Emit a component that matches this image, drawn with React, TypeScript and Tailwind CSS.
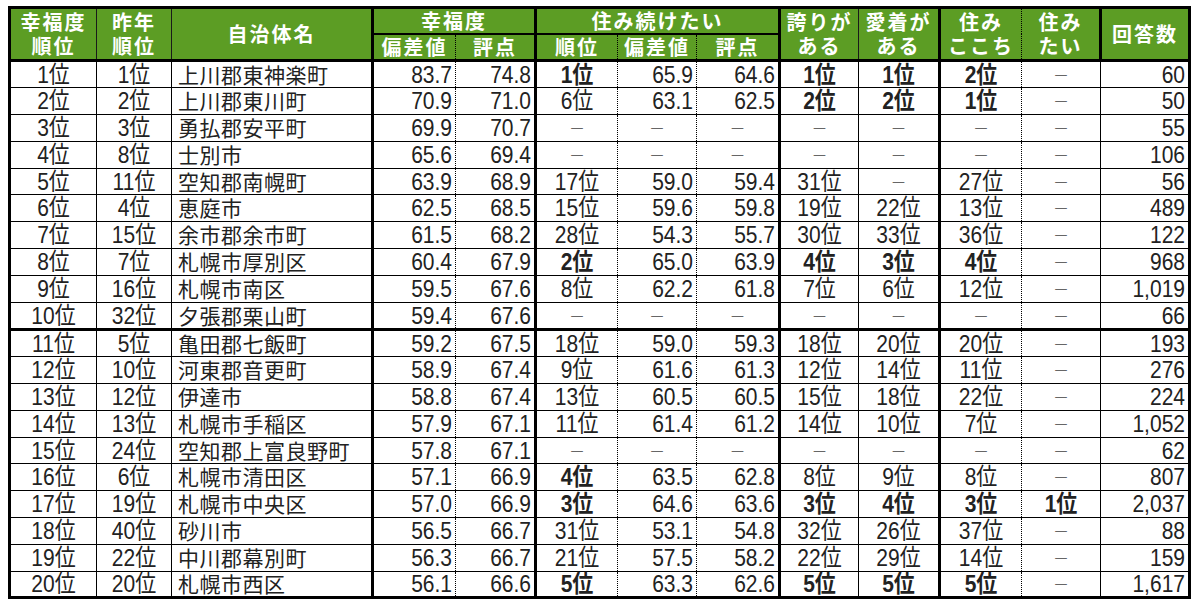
import React from "react";

const rows: string[][] = [
  ["1位", "1位", "上川郡東神楽町", "83.7", "74.8", "1位", "65.9", "64.6", "1位", "1位", "2位", "－", "60"],
  ["2位", "2位", "上川郡東川町", "70.9", "71.0", "6位", "63.1", "62.5", "2位", "2位", "1位", "－", "50"],
  ["3位", "3位", "勇払郡安平町", "69.9", "70.7", "－", "－", "－", "－", "－", "－", "－", "55"],
  ["4位", "8位", "士別市", "65.6", "69.4", "－", "－", "－", "－", "－", "－", "－", "106"],
  ["5位", "11位", "空知郡南幌町", "63.9", "68.9", "17位", "59.0", "59.4", "31位", "－", "27位", "－", "56"],
  ["6位", "4位", "恵庭市", "62.5", "68.5", "15位", "59.6", "59.8", "19位", "22位", "13位", "－", "489"],
  ["7位", "15位", "余市郡余市町", "61.5", "68.2", "28位", "54.3", "55.7", "30位", "33位", "36位", "－", "122"],
  ["8位", "7位", "札幌市厚別区", "60.4", "67.9", "2位", "65.0", "63.9", "4位", "3位", "4位", "－", "968"],
  ["9位", "16位", "札幌市南区", "59.5", "67.6", "8位", "62.2", "61.8", "7位", "6位", "12位", "－", "1,019"],
  ["10位", "32位", "夕張郡栗山町", "59.4", "67.6", "－", "－", "－", "－", "－", "－", "－", "66"],
  ["11位", "5位", "亀田郡七飯町", "59.2", "67.5", "18位", "59.0", "59.3", "18位", "20位", "20位", "－", "193"],
  ["12位", "10位", "河東郡音更町", "58.9", "67.4", "9位", "61.6", "61.3", "12位", "14位", "11位", "－", "276"],
  ["13位", "12位", "伊達市", "58.8", "67.4", "13位", "60.5", "60.5", "15位", "18位", "22位", "－", "224"],
  ["14位", "13位", "札幌市手稲区", "57.9", "67.1", "11位", "61.4", "61.2", "14位", "10位", "7位", "－", "1,052"],
  ["15位", "24位", "空知郡上富良野町", "57.8", "67.1", "－", "－", "－", "－", "－", "－", "－", "62"],
  ["16位", "6位", "札幌市清田区", "57.1", "66.9", "4位", "63.5", "62.8", "8位", "9位", "8位", "－", "807"],
  ["17位", "19位", "札幌市中央区", "57.0", "66.9", "3位", "64.6", "63.6", "3位", "4位", "3位", "1位", "2,037"],
  ["18位", "40位", "砂川市", "56.5", "66.7", "31位", "53.1", "54.8", "32位", "26位", "37位", "－", "88"],
  ["19位", "22位", "中川郡幕別町", "56.3", "66.7", "21位", "57.5", "58.2", "22位", "29位", "14位", "－", "159"],
  ["20位", "20位", "札幌市西区", "56.1", "66.6", "5位", "63.3", "62.6", "5位", "5位", "5位", "－", "1,617"],
];

const widths = [87, 75, 201, 83, 80, 82, 79, 83, 79, 81, 82, 79, 89];

const rightBorder: Record<number, string> = {
  2: "border-r-[3px]",
  3: "[border-right-style:dotted]",
  4: "border-r-[3px]",
  5: "[border-right-style:dotted]",
  6: "[border-right-style:dotted]",
  7: "border-r-[3px]",
  9: "border-r-[3px]",
  10: "[border-right-style:dotted]",
  12: "border-r-[3px]",
};
const leftBorder: Record<number, string> = {
  4: "[border-left-style:dotted]",
  6: "[border-left-style:dotted]",
  7: "[border-left-style:dotted]",
  11: "[border-left-style:dotted]",
};

const boldCols = new Set([5, 8, 9, 10, 11]);

function isBold(col: number, v: string) {
  if (!boldCols.has(col)) return false;
  const m = v.match(/^(\d+)位$/);
  return !!m && parseInt(m[1], 10) <= 5;
}

const hd =
  "bg-[#5c9d24] text-white font-bold text-[20px] tracking-[2px] leading-[24px] text-center border border-[#1a1a1a] p-0";

export default function App() {
  return (
    <div className="w-[1200px] h-[609px] bg-white pl-[8px] pt-[6px] font-['Liberation_Sans','Noto_Sans_CJK_JP',sans-serif]">
      <table className="border-collapse table-fixed w-[1183px] border-[3px] border-black">
        <colgroup>
          {widths.map((w, i) => (
            <col key={i} style={{ width: w }} />
          ))}
        </colgroup>
        <thead className="font-['Noto_Sans_CJK_JP',sans-serif]">
          <tr className="h-[26px]">
            <th rowSpan={2} className={`${hd} border-b-[3px] border-b-black`}>
              幸福度<br />順位
            </th>
            <th rowSpan={2} className={`${hd} border-b-[3px] border-b-black`}>
              昨年<br />順位
            </th>
            <th rowSpan={2} className={`${hd} border-b-[3px] border-b-black border-r-[3px] border-r-black`}>
              自治体名
            </th>
            <th colSpan={2} className={`${hd} border-b-2 border-b-black border-r-[3px] border-r-black`}>
              幸福度
            </th>
            <th colSpan={3} className={`${hd} border-b-2 border-b-black border-r-[3px] border-r-black`}>
              住み続けたい
            </th>
            <th rowSpan={2} className={`${hd} border-b-[3px] border-b-black`}>
              誇りが<br />ある
            </th>
            <th rowSpan={2} className={`${hd} border-b-[3px] border-b-black border-r-[3px] border-r-black`}>
              愛着が<br />ある
            </th>
            <th rowSpan={2} className={`${hd} border-b-[3px] border-b-black [border-right-style:dotted] border-r-black`}>
              住み<br />ここち
            </th>
            <th rowSpan={2} className={`${hd} border-b-[3px] border-b-black [border-left-style:dotted] border-r-[3px] border-r-black`}>
              住み<br />たい
            </th>
            <th rowSpan={2} className={`${hd} border-b-[3px] border-b-black`}>
              回答数
            </th>
          </tr>
          <tr className="h-[26px]">
            <th className={`${hd} border-b-[3px] border-b-black [border-right-style:dotted] border-r-black`}>偏差値</th>
            <th className={`${hd} border-b-[3px] border-b-black [border-left-style:dotted] border-r-[3px] border-r-black`}>評点</th>
            <th className={`${hd} border-b-[3px] border-b-black [border-right-style:dotted] border-r-black`}>順位</th>
            <th className={`${hd} border-b-[3px] border-b-black [border-left-style:dotted] [border-right-style:dotted] border-r-black`}>偏差値</th>
            <th className={`${hd} border-b-[3px] border-b-black [border-left-style:dotted] border-r-[3px] border-r-black`}>評点</th>
          </tr>
        </thead>
        <tbody className="text-[#222] text-[21px]">
          {rows.map((r, ri) => (
            <tr key={ri} className={ri === 4 || ri === 14 || ri === 19 ? "h-[26px]" : "h-[27px]"}>
              {r.map((v, ci) => {
                const dash = v === "－";
                const align =
                  ci === 2
                    ? "text-left pl-[6px]"
                    : dash
                    ? "text-center"
                    : [3, 4, 6, 7, 12].includes(ci)
                    ? "text-right pr-[3px]"
                    : "text-center";
                const bb = ri === 9 ? "border-b-[3px]" : "";
                return (
                  <td
                    key={ci}
                    className={`border border-black p-0 leading-[22px] whitespace-nowrap ${align} ${
                      rightBorder[ci] ?? ""
                    } ${leftBorder[ci] ?? ""} ${bb} ${isBold(ci, v) ? "font-bold" : ""}`}
                  >
                    {dash ? (
                      <span className="text-[#666] text-[16px]">－</span>
                    ) : ci === 2 ? (
                      <span className="font-['Noto_Sans_CJK_JP',sans-serif] tracking-[0.5px]">{v}</span>
                    ) : (
                      <span className="inline-block scale-y-115 origin-center">{v}</span>
                    )}
                  </td>
                );
              })}
            </tr>
          ))}
        </tbody>
      </table>
    </div>
  );
}
